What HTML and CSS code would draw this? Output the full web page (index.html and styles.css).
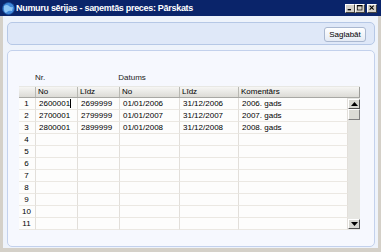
FILE: index.html
```html
<!DOCTYPE html>
<html>
<head>
<meta charset="utf-8">
<link rel="stylesheet" href="styles.css">
</head>
<body>
<div class="window">
  <div class="titlebar">
    <svg class="appicon" width="13" height="13" viewBox="0 0 13 13">
      <circle cx="6.5" cy="6.5" r="6" fill="#3f86d8"/>
      <path d="M2 4 Q5 2 7 4 T11 5 L10 9 Q7 8 5 10 T2 8 Z" fill="#8cc4f4"/>
      <circle cx="6.5" cy="6.5" r="6" fill="none" stroke="#1c4f9a" stroke-width="0.8"/>
    </svg>
    <span class="title">Numuru sērijas - saņemtās preces: Pārskats</span>
    <div class="wbtns">
      <span class="wbtn"><svg width="9" height="9" viewBox="0 0 9 9"><rect x="1" y="6" width="5" height="2" fill="#000"/></svg></span>
      <span class="wbtn"><svg width="9" height="9" viewBox="0 0 9 9"><rect x="0.5" y="0.5" width="7" height="7" fill="none" stroke="#000"/><rect x="0" y="0" width="8" height="2" fill="#000"/></svg></span>
      <span class="wbtn close"><svg width="9" height="9" viewBox="0 0 9 9"><path d="M1 1 L7 7 M7 1 L1 7" stroke="#000" stroke-width="1.6"/></svg></span>
    </div>
  </div>
  <div class="client">
    <div class="toppanel">
      <button class="savebtn">Saglabāt</button>
    </div>
    <div class="mainpanel">
      <div class="labels">
        <span class="lbl-nr">Nr.</span>
        <span class="lbl-dat">Datums</span>
      </div>
      <div class="grid">
        <div class="head">
          <div class="hc"></div>
          <div class="hc">No</div>
          <div class="hc">Līdz</div>
          <div class="hc">No</div>
          <div class="hc">Līdz</div>
          <div class="hc last">Komentārs</div>
        </div>
        <div class="body">
          <div class="rows">
            <div class="rn">1</div><div class="c">2600001<span class="caret"></span></div><div class="c">2699999</div><div class="c">01/01/2006</div><div class="c">31/12/2006</div><div class="c">2006. gads</div>
            <div class="rn">2</div><div class="c">2700001</div><div class="c">2799999</div><div class="c">01/01/2007</div><div class="c">31/12/2007</div><div class="c">2007. gads</div>
            <div class="rn">3</div><div class="c">2800001</div><div class="c">2899999</div><div class="c">01/01/2008</div><div class="c">31/12/2008</div><div class="c">2008. gads</div>
            <div class="rn">4</div><div class="c"></div><div class="c"></div><div class="c"></div><div class="c"></div><div class="c"></div>
            <div class="rn">5</div><div class="c"></div><div class="c"></div><div class="c"></div><div class="c"></div><div class="c"></div>
            <div class="rn">6</div><div class="c"></div><div class="c"></div><div class="c"></div><div class="c"></div><div class="c"></div>
            <div class="rn">7</div><div class="c"></div><div class="c"></div><div class="c"></div><div class="c"></div><div class="c"></div>
            <div class="rn">8</div><div class="c"></div><div class="c"></div><div class="c"></div><div class="c"></div><div class="c"></div>
            <div class="rn">9</div><div class="c"></div><div class="c"></div><div class="c"></div><div class="c"></div><div class="c"></div>
            <div class="rn">10</div><div class="c"></div><div class="c"></div><div class="c"></div><div class="c"></div><div class="c"></div>
            <div class="rn">11</div><div class="c"></div><div class="c"></div><div class="c"></div><div class="c"></div><div class="c"></div>
          </div>
          <div class="vscroll">
            <div class="sbtn"><svg width="7" height="4" viewBox="0 0 7 4"><path d="M3.5 0 L7 4 L0 4 Z" fill="#000"/></svg></div>
            <div class="thumb"></div>
            <div class="track"></div>
            <div class="sbtn"><svg width="7" height="4" viewBox="0 0 7 4"><path d="M0 0 L7 0 L3.5 4 Z" fill="#000"/></svg></div>
          </div>
        </div>
      </div>
    </div>
  </div>
</div>
</body>
</html>
```
FILE: styles.css
```css
* { box-sizing: border-box; }
html, body { margin: 0; padding: 0; }
body {
  width: 381px;
  height: 252px;
  overflow: hidden;
  font-family: "Liberation Sans", Arial, sans-serif;
  font-size: 8px;
  color: #000;
}
.window {
  width: 381px;
  height: 252px;
  background: #d4d0c8;
  display: flex;
  flex-direction: column;
}
.titlebar {
  height: 16px;
  background: #0a246a;
  display: flex;
  align-items: center;
  padding-left: 2px;
  color: #fff;
}
.appicon { flex: none; margin-right: 1px; }
.title {
  font-weight: bold;
  font-size: 9px;
  letter-spacing: -0.3px;
  white-space: nowrap;
}
.wbtns {
  margin-left: auto;
  display: flex;
  margin-right: 4px;
}
.wbtn {
  width: 10px;
  height: 9px;
  background: #d4d0c8;
  border-top: 1px solid #fff;
  border-left: 1px solid #fff;
  border-right: 1px solid #404040;
  border-bottom: 1px solid #404040;
  display: flex;
  align-items: center;
  justify-content: center;
  overflow: hidden;
}
.wbtn svg { width: 6px; height: 6px; }
.wbtn.close { margin-left: 2px; }
.client {
  flex: 1;
  margin: 0 3px 4px 3px;
  background: #eef3fb;
  padding: 6px 3px 1px 4px;
  display: flex;
  flex-direction: column;
  gap: 5px;
}
.toppanel {
  height: 23px;
  background: #dfe8f8;
  border: 1px solid #b6c8e6;
  border-radius: 5px;
  display: flex;
  align-items: center;
  justify-content: flex-end;
  padding: 1px 8px 0 0;
}
.savebtn {
  width: 42px;
  height: 15px;
  padding: 0;
  font-family: "Liberation Sans", Arial, sans-serif;
  font-size: 8px;
  color: #000;
  background: linear-gradient(#ffffff, #e4eaf4);
  border: 1px solid #aab8d0;
  border-radius: 3px;
}
.mainpanel {
  flex: 1;
  background: #f6f8fe;
  border: 1px solid #c3d1ec;
  border-radius: 5px;
  padding: 21px 0 0 11px;
}
.labels {
  height: 10px;
  display: flex;
  align-items: center;
  margin-bottom: 4px;
  color: #222;
}
.lbl-nr { margin-left: 16px; }
.lbl-dat { margin-left: 73px; }
.grid { width: 341px; }
.head {
  display: grid;
  grid-template-columns: 17px 42px 42px 60px 59px 121px;
  height: 12px;
  background: linear-gradient(#f6f6f4, #dcdbd6);
  border-top: 1px solid #e8e8e4;
  border-bottom: 1px solid #a8a8a4;
}
.hc {
  border-right: 1px solid #b8b8b2;
  padding-left: 2px;
  line-height: 10px;
  white-space: nowrap;
}
.hc.last { border-right: 1px solid #9c9c98; }
.body {
  display: flex;
  height: 132px;
}
.rows {
  width: 329px;
  display: grid;
  grid-template-columns: 17px 42px 42px 60px 59px 109px;
  grid-auto-rows: 12px;
  background: #fdfdfc;
}
.rn, .c {
  border-right: 1px solid #e2dfda;
  border-bottom: 1px solid #ebe8e2;
  line-height: 11px;
  white-space: nowrap;
}
.rn { text-align: center; padding-right: 1px; }
.c { padding-left: 3px; }
.caret {
  display: inline-block;
  width: 1px;
  height: 9px;
  background: #000;
  vertical-align: -2px;
}
.vscroll {
  width: 12px;
  display: flex;
  flex-direction: column;
  background: #e6e6e2;
  padding-top: 1px;
  padding-bottom: 1px;
}
.sbtn {
  height: 10px;
  background: #d8d8d2;
  border-top: 1px solid #fff;
  border-left: 1px solid #fff;
  border-right: 1px solid #505050;
  border-bottom: 1px solid #505050;
  display: flex;
  align-items: center;
  justify-content: center;
}
.thumb {
  height: 11px;
  background: #dcdcd6;
  border-top: 1px solid #fff;
  border-left: 1px solid #fff;
  border-right: 1px solid #808080;
  border-bottom: 1px solid #808080;
}
.track { flex: 1; }
```
